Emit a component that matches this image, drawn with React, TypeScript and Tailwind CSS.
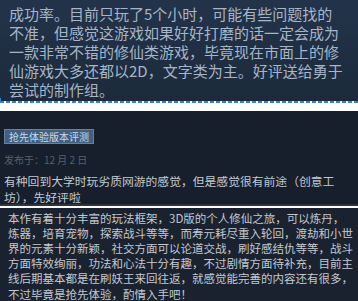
import React from 'react';

const firstReview = [
  '成功率。目前只玩了5个小时，可能有些问题找的',
  '不准，但感觉这游戏如果好好打磨的话一定会成为',
  '一款非常不错的修仙类游戏，毕竟现在市面上的修',
  '仙游戏大多还都以2D，文字类为主。好评送给勇于',
  '尝试的制作组。',
];

const secondReview = [
  '有种回到大学时玩劣质网游的感觉，但是感觉很有前途（创意工',
  '坊），先好评啦',
];

const thirdReview = [
  '本作有着十分丰富的玩法框架，3D版的个人修仙之旅，可以炼丹，',
  '炼器，培育宠物，探索战斗等等，而寿元耗尽重入轮回，渡劫和小世',
  '界的元素十分新颖，社交方面可以论道交战，刷好感结仇等等，战斗',
  '方面特效绚丽，功法和心法十分有趣，不过剧情方面待补充，目前主',
  '线后期基本都是在刷妖王来回往返，就感觉能完善的内容还有很多，',
  '不过毕竟是抢先体验，酌情入手吧！',
];

export default function App() {
  return (
    <div className="w-[358px] h-[301px] overflow-hidden bg-white font-['Noto_Sans_CJK_SC','Microsoft_YaHei',sans-serif]">
      {/* expanded review text */}
      <div className="h-[101px] pl-[9px] pt-[3.5px] bg-gradient-to-b from-[#23334a] to-[#1c2a3b] text-[15px] leading-[19px] text-[#a6b6c8]">
        {firstReview.map(l => (
          <div key={l} className="whitespace-nowrap">{l}</div>
        ))}
      </div>
      <div className="relative h-[2px] bg-[repeating-linear-gradient(90deg,#2f82d8_0_4px,transparent_4px_6px)]">
        <span className="absolute left-0 -top-[3px] w-[1px] h-[3px] bg-[#2f82d8]" />
      </div>
      <div className="h-[8px]" />

      {/* early access review card */}
      <div className="h-[95px] bg-[#161f2b] pl-[4px] pt-[11px] border-b-2 border-[#2b3441]">
        <span className="inline-block border border-[#5f82a6] bg-[#415f7e] px-[4px] text-[10px] leading-[13px] text-[#c3dbef]">
          抢先体验版本评测
        </span>
        <div className="mt-[8px] text-[10px] leading-[12px] text-[#56616d]">发布于：12 月 2 日</div>
        <div className="mt-[6.5px] text-[11.8px] leading-[16.5px] text-[#c2c9d0]">
          {secondReview.map(l => (
            <div key={l} className="whitespace-nowrap">{l}</div>
          ))}
        </div>
      </div>
      <div className="h-[2px]" />

      <div className="h-[93px] bg-[#1a2230] pl-[8px] pt-[2.5px] text-[11.5px] leading-[15.2px] text-[#c3c9cf]">
        {thirdReview.map(l => (
          <div key={l} className="whitespace-nowrap">{l}</div>
        ))}
      </div>
    </div>
  );
}
